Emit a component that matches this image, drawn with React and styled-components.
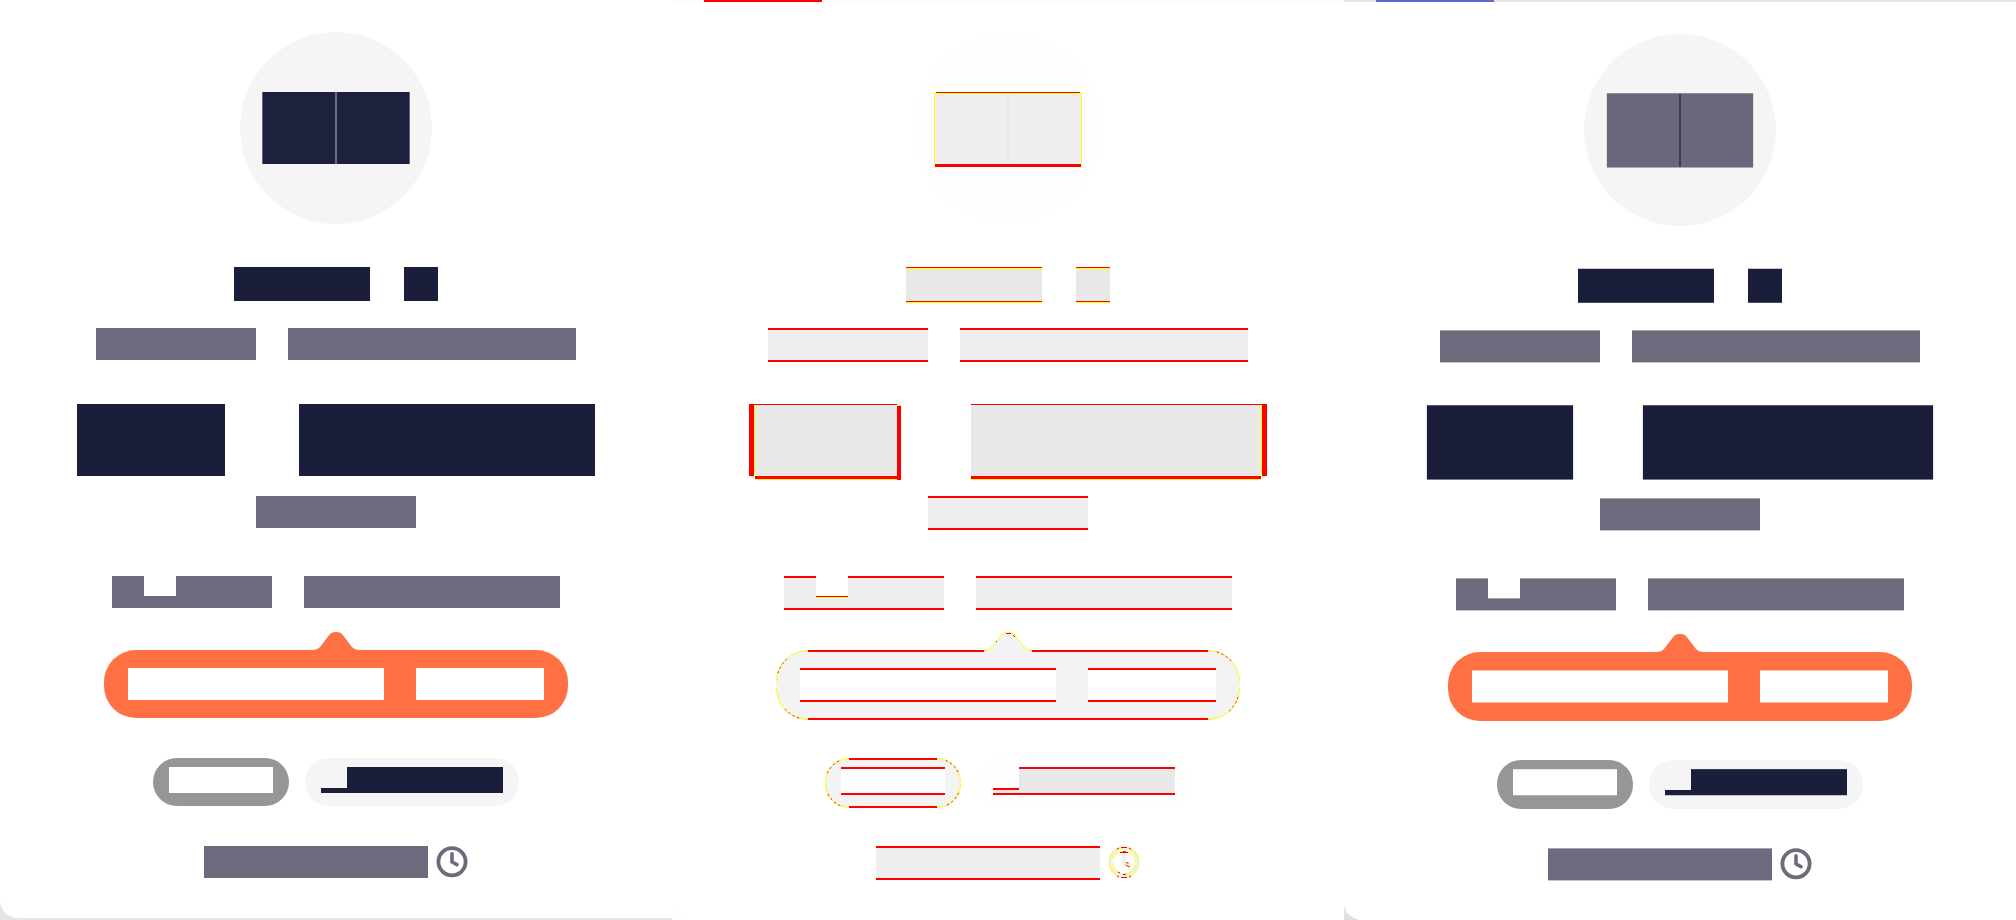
import React from "react";
import styled, { createGlobalStyle, css, ThemeProvider } from "styled-components";

const GlobalStyle = createGlobalStyle`
  * { box-sizing: border-box; }
  body { margin: 0; background: #fff; font-family: "Liberation Sans", sans-serif; }
`;

const RED = "#ff0000";
const YELLOW = "#ffff00";

const before = {
  name: "before",
  rows: "235px 61px 76px 92px 80px 56px 126px 88px 32px",
  ink: "#1b1e3b",
  muted: "#6b6b7d",
  circle: "#f5f5f5",
  bubble: "#ff7143",
  pill: "#969696",
  pillLight: "#f5f5f5",
  avatar: "#1e213d",
  seam: "#6b6b7d",
  grow: 0,
};

const diff = {
  ...before,
  name: "diff",
  ink: "#e8e8e8",
  muted: "#efefef",
  circle: "#fefefe",
  bubble: "#f3f3f3",
  pill: "#f3f3f3",
  pillLight: "#fefefe",
  avatar: "#efefef",
  seam: "#e9e9e9",
  grow: 2,
};

const after = {
  ...before,
  name: "after",
  rows: "234px 62px 75px 93px 80px 56px 126px 88px 32px",
  avatar: "#68687a",
  seam: "#3b3b58",
  grow: 1,
};

/* one solid strip as a background layer */
const strip = (color, pos, size) => `linear-gradient(${color}, ${color}) ${pos} / ${size} no-repeat`;

const Board = styled.main`
  display: grid;
  grid-template-columns: repeat(3, minmax(0, 1fr));
  min-height: 100vh;
  overflow: hidden;
`;

const backdrops = {
  before: "#e4e4e4",
  diff: "#fcfcfc",
  after: "linear-gradient(#e4e4e4 0 50%, #f0f0f0 98%, #dcdcdc)",
};

const Panel = styled.section`
  display: flex;
  flex-direction: column;
  background: ${({ theme }) => backdrops[theme.name]};
  padding-bottom: ${({ theme }) => (theme.name === "before" ? 2 : 0)}px;
`;

const TabBar = styled.div`
  height: 2px;
  padding-left: 32px;
  background: ${({ theme }) => (theme.name === "diff" ? "#fcfcfc" : "#e4e4e4")};
`;

const TabIndicator = styled.div`
  width: 118px;
  height: 2px;
  background: ${({ theme }) => (theme.name === "diff" ? RED : "#566bd0")};
`;

const Card = styled.article`
  flex: 1;
  display: grid;
  grid-template-rows: ${({ theme }) => theme.rows};
  justify-items: center;
  align-items: start;
  align-content: start;
  padding: ${({ theme }) => (theme.name === "diff" ? 30 : 32)}px 0 40px;
  background: #fff;
  border-bottom-left-radius: 18px;
`;

const Row = styled.div`
  display: flex;
  gap: ${({ $gap = 32 }) => $gap}px;
`;

const Circle = styled.div`
  display: flex;
  justify-content: center;
  width: 192px;
  height: 192px;
  padding-top: ${({ theme }) => (theme.name === "after" ? 59 : 60)}px;
  border-radius: 50%;
  background: ${({ theme }) => theme.circle};
`;

const avatarLayers = {
  before: (t) => `${strip(t.seam, "0 0", "1px 100%")}, ${strip(t.seam, "100% 0", "1px 100%")}`,
  diff: () =>
    [
      strip(YELLOW, "0 0", "1px 72px"),
      strip(YELLOW, "100% 0", "1px 72px"),
      strip("#fdfdfd", "0 100%", "1px 4px"),
      strip("#fdfdfd", "100% 100%", "1px 4px"),
      strip(RED, "50% 0", "144px 1px"),
      strip(YELLOW, "50% 1px", "146px 1px"),
      strip(RED, "50% 72px", "146px 3px"),
      strip("#fdfdfd", "0 100%", "100% 1px"),
    ].join(", "),
  after: () =>
    [
      strip("#dedee2", "0 0", "1px 100%"),
      strip("#dedee2", "100% 0", "1px 100%"),
      strip("#8a8a98", "0 0", "100% 1px"),
      strip("#a9a9b8", "0 100%", "100% 1px"),
    ].join(", "),
};

const Initials = styled.div`
  width: 148px;
  height: ${({ theme }) => ({ before: 72, diff: 76, after: 75 })[theme.name]}px;
  background: ${({ theme }) =>
    `${avatarLayers[theme.name](theme)}, ${strip(theme.seam, "50% 0", "2px 100%")}, ${theme.avatar}`};
`;

const softEdges = css`
  border-top: 1px solid ${({ $edge = "#a3a3af" }) => $edge};
  border-bottom: 1px solid ${({ $edgeEnd = "#c3c3cc" }) => $edgeEnd};
`;

const redEdges = css`
  border-top: 2px solid ${RED};
  border-bottom: 2px solid ${RED};
`;

const edges = ({ theme }) =>
  theme.name === "diff" ? redEdges : theme.name === "after" ? softEdges : "";

const Bar = styled.span`
  width: ${({ $w }) => $w}px;
  height: ${({ theme, $h = 32 }) => $h + theme.grow}px;
  background: ${({ theme, $tone = "muted" }) => ($tone === "white" ? "#fff" : theme[$tone])};
  ${edges}
`;

const TitleBar = styled.span`
  width: ${({ $w }) => $w}px;
  height: ${({ theme }) => 34 + theme.grow}px;
  background: ${({ theme }) =>
    ({
      before: theme.ink,
      diff: `linear-gradient(${RED} 1px, ${YELLOW} 1px 2px, ${theme.ink} 2px 34px, ${RED} 34px 35px, ${YELLOW} 35px)`,
      after: `linear-gradient(#c9c9cf 1px, ${theme.ink} 1px 34px, #4a4c64 34px)`,
    })[theme.name]};
`;

const priceSizes = { before: [148, 296, 74, 72], diff: [152, 296, 70, 76], after: [148, 292, 68, 75] };

const firstDiff = [
  strip("#fff", "0 100%", "6px 4px"),
  strip("#fff", "100% 0", "4px 1px"),
  strip(YELLOW, "100% 1px", "4px 1px"),
  strip(RED, "0 0", "5px 100%"),
  strip(RED, "100% 0", "4px 100%"),
  strip(RED, "0 0", "100% 1px"),
  strip(YELLOW, "5px 0", "1px 100%"),
  strip(YELLOW, "0 100%", "100% 1px"),
  strip(RED, "0 72px", "100% 3px"),
].join(", ");

const secondDiff = [
  strip("#fff", "100% 100%", "6px 4px"),
  strip(RED, "100% 0", "5px 100%"),
  strip(RED, "0 0", "100% 1px"),
  strip(YELLOW, "290px 0", "1px 100%"),
  strip(YELLOW, "0 100%", "100% 1px"),
  strip(RED, "0 72px", "100% 3px"),
].join(", ");

const priceAfter = [
  strip("#e6e6ea", "0 0", "1px 100%"),
  strip("#e6e6ea", "100% 0", "1px 100%"),
  strip("#55576c", "0 0", "100% 1px"),
  strip("#77798c", "0 100%", "100% 1px"),
].join(", ");

const PriceRow = styled.div`
  display: flex;
  gap: ${({ theme }) => priceSizes[theme.name][2]}px;
`;

const PriceBar = styled.span`
  width: ${({ theme, $wide }) => priceSizes[theme.name][$wide ? 1 : 0]}px;
  height: ${({ theme }) => priceSizes[theme.name][3]}px;
  background: ${({ theme, $wide }) =>
    ({
      before: theme.ink,
      diff: `${$wide ? secondDiff : firstDiff}, ${theme.ink}`,
      after: `${priceAfter}, ${theme.ink}`,
    })[theme.name]};
`;

/* a word with a low glyph: only its foot is drawn */
const Word = styled.span`
  display: flex;
  align-items: flex-end;
`;

const LowGlyph = styled.span`
  width: ${({ $w }) => $w}px;
  height: ${({ theme, $h }) => $h + theme.grow}px;
  background: ${({ theme, $tone }) => theme[$tone]};
  ${edges}
  ${({ theme, $tone }) =>
    theme.name === "diff" && $tone === "muted" && `border-top-width: 1px; box-shadow: inset 0 1px ${YELLOW};`}
`;

const Bubble = styled.div`
  position: relative;
  display: flex;
  flex-direction: column;
  align-items: center;
`;

const Arrow = styled.svg`
  display: block;
  position: relative;
  z-index: 1;
  margin-bottom: -2px;
`;

const BubbleBody = styled.div`
  display: flex;
  gap: 32px;
  padding: 18px 24px;
  border-radius: 32px;
  background: ${({ theme }) => theme.bubble};
`;

const Pill = styled.div`
  position: relative;
  display: flex;
  padding: 9px 16px 13px;
  border-radius: 24px;
  background: ${({ theme, $light }) => ($light ? theme.pillLight : theme.pill)};
`;

const Outline = styled.svg`
  position: absolute;
  left: 0;
  bottom: 0;
`;

function DiffOutline({ w, h, r }) {
  const arcs = `M.5 ${r} A${r} ${r} 0 0 1 ${r} .5 M${w - r} .5 A${r} ${r} 0 0 1 ${w - 0.5} ${r}
    M${w - 0.5} ${h - r} A${r} ${r} 0 0 1 ${w - r} ${h - 0.5} M${r} ${h - 0.5} A${r} ${r} 0 0 1 .5 ${h - r}`;
  return (
    <Outline width={w} height={h} fill="none" aria-hidden="true">
      <path d={arcs} stroke={YELLOW} />
      <path d={arcs} stroke={RED} strokeDasharray="0 9 2 3 2 3 2 3 2 24" />
      <path d={`M${r} 1H${w - r}M${r} ${h - 1}H${w - r}`} stroke={RED} strokeWidth="2" />
    </Outline>
  );
}

function BubbleArrow({ color, isDiff }) {
  const edge = "M0 18C4 18 6 17 8 15L18 2C21 -0.7 27 -0.7 30 2L40 15C42 17 44 18 48 18";
  return (
    <Arrow width="48" height="20" aria-hidden="true">
      <path d={`${edge}V20H0Z`} fill={color} />
      {isDiff && <path d={edge} fill="none" stroke={YELLOW} />}
      {isDiff && <path d="M12 10l1-1M22 1.5h5M29 3l2 2" fill="none" stroke={RED} />}
    </Arrow>
  );
}

function Clock({ color, isDiff }) {
  return (
    <svg width="32" height="32" viewBox="0 0 32 32" fill="none" aria-hidden="true">
      <circle cx="16" cy="15.7" r="13.6" stroke={color} strokeWidth="3.8" />
      <path d="M16 7.8V16l5 2.6" stroke={color} strokeWidth="3.6" strokeLinecap="round" strokeLinejoin="round" />
      {isDiff && (
        <g>
          <circle cx="16" cy="16.5" r="15" stroke={YELLOW} strokeDasharray="20 3.5" strokeDashoffset="-4" />
          <circle cx="16" cy="16.5" r="11.4" stroke={YELLOW} strokeDasharray="14 3.9" strokeDashoffset="-3" />
          <path
            d="M13 1.5h6M9 3l2-1M21 2l2 1M13 31.5h6M9 30l2 1M21 31l2-1M12 6.5h8M15 5.5h3M15 28.5h3M10 26l2 1M18 16.5l3 1M17 19l5 2"
            stroke={RED}
          />
          <path d="M20 17l2 1M15 18l3 2M22 20v1" stroke={YELLOW} />
        </g>
      )}
    </svg>
  );
}

function Snapshot({ theme }) {
  const isDiff = theme.name === "diff";
  return (
    <ThemeProvider theme={theme}>
      <Panel>
        {theme.name !== "before" && (
          <TabBar>
            <TabIndicator />
          </TabBar>
        )}
        <Card>
          <Circle>
            <Initials />
          </Circle>
          <Row $gap={34}>
            <TitleBar $w={136} />
            <TitleBar $w={34} />
          </Row>
          <Row>
            <Bar $w={160} />
            <Bar $w={288} />
          </Row>
          <PriceRow>
            <PriceBar />
            <PriceBar $wide />
          </PriceRow>
          <Row>
            <Bar $w={160} />
          </Row>
          <Row>
            <Word>
              <Bar $w={32} />
              <LowGlyph $w={32} $h={12} $tone="muted" />
              <Bar $w={96} />
            </Word>
            <Bar $w={256} />
          </Row>
          <Bubble>
            <BubbleArrow color={theme.bubble} isDiff={isDiff} />
            <BubbleBody>
              {isDiff && <DiffOutline w={464} h={70} r={32} />}
              <Bar $w={256} $tone="white" $edge="#ffc0a8" $edgeEnd="#ffb59c" />
              <Bar $w={128} $tone="white" $edge="#ffc0a8" $edgeEnd="#ffb59c" />
            </BubbleBody>
          </Bubble>
          <Row $gap={16}>
            <Pill>
              {isDiff && <DiffOutline w={136} h={50} r={24} />}
              <Bar $w={104} $h={26} $tone="white" $edge="#e6e6e6" $edgeEnd="#b0b0b0" />
            </Pill>
            <Pill $light>
              <Word>
                <LowGlyph $w={26} $h={5} $tone="ink" $edge="#1b1e3b" $edgeEnd="#c3c3cc" />
                <Bar $w={156} $h={26} $tone="ink" $edge="#3a3c56" $edgeEnd="#c3c3cc" />
              </Word>
            </Pill>
          </Row>
          <Row $gap={8}>
            <Bar $w={224} />
            <Clock color={theme.muted} isDiff={isDiff} />
          </Row>
        </Card>
      </Panel>
    </ThemeProvider>
  );
}

export default function App() {
  return (
    <>
      <GlobalStyle />
      <Board>
        <Snapshot theme={before} />
        <Snapshot theme={diff} />
        <Snapshot theme={after} />
      </Board>
    </>
  );
}
